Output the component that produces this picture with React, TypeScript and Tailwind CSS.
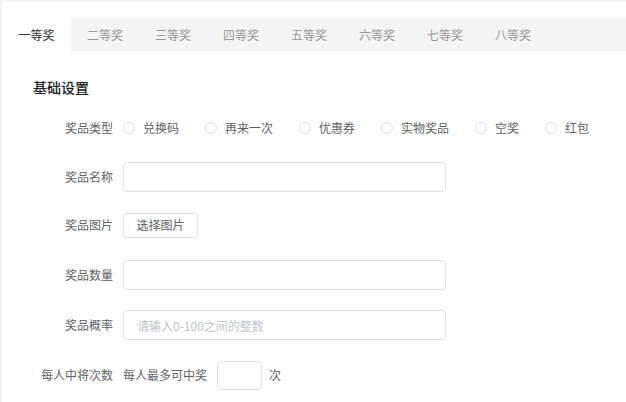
const tabs = ["一等奖", "二等奖", "三等奖", "四等奖", "五等奖", "六等奖", "七等奖", "八等奖"];
const prizeTypes = ["兑换码", "再来一次", "优惠券", "实物奖品", "空奖", "红包"];

function Label({ children }: { children: React.ReactNode }) {
  return (
    <div className="w-[121px] shrink-0 pr-[10px] text-right text-[12px] text-[#606266]">
      {children}
    </div>
  );
}

export default function App() {
  return (
    <div
      className="h-screen bg-[#f2f2f2] pt-[2px] pl-[2px] overflow-hidden"
      style={{ fontFamily: '"Noto Sans CJK SC", "Noto Sans", sans-serif' }}
    >
      <div className="h-full bg-white pt-[16px]">
        <div className="flex h-[33px]">
          <div className="flex w-[69px] items-center justify-center text-[12px] text-[#333]">
            {tabs[0]}
          </div>
          <div className="flex flex-1 bg-[#f4f4f4]">
            {tabs.slice(1).map((t) => (
              <div
                key={t}
                className="flex w-[68px] items-center justify-center text-[12px] text-[#999]"
              >
                {t}
              </div>
            ))}
          </div>
        </div>

        <div className="mt-[26px] pl-[31px] h-[20px] leading-[20px] text-[14px] font-medium text-[#222]">
          基础设置
        </div>

        <div className="mt-[16px] flex h-[30px] items-center">
          <Label>奖品类型</Label>
          {prizeTypes.map((p) => (
            <label key={p} className="mr-[26px] flex items-center">
              <span className="h-[12px] w-[12px] rounded-full border border-[#dcdfe6] bg-white" />
              <span className="ml-[8px] text-[12px] text-[#606266]">{p}</span>
            </label>
          ))}
        </div>

        <div className="mt-[19px] flex h-[30px] items-center">
          <Label>奖品名称</Label>
          <input className="h-[30px] w-[323px] rounded-[4px] border border-[#dcdfe6] px-[13px] text-[12px] outline-none" />
        </div>

        <div className="mt-[18px] flex h-[30px] items-center">
          <Label>奖品图片</Label>
          <button className="h-[25px] w-[75px] rounded-[3px] border border-[#dcdfe6] bg-white text-[12px] text-[#606266]">
            选择图片
          </button>
        </div>

        <div className="mt-[20px] flex h-[30px] items-center">
          <Label>奖品数量</Label>
          <input className="h-[30px] w-[323px] rounded-[4px] border border-[#dcdfe6] px-[13px] text-[12px] outline-none" />
        </div>

        <div className="mt-[20px] flex h-[30px] items-center">
          <Label>奖品概率</Label>
          <input
            placeholder="请输入0-100之间的整数"
            className="h-[30px] w-[323px] rounded-[4px] border border-[#dcdfe6] px-[13px] text-[12px] outline-none placeholder:text-[#c0c4cc]"
          />
        </div>

        <div className="mt-[20px] flex h-[30px] items-center">
          <Label>每人中将次数</Label>
          <span className="text-[12px] text-[#606266]">每人最多可中奖</span>
          <input className="ml-[10px] h-[29px] w-[45px] rounded-[4px] border border-[#dcdfe6] px-[6px] text-[12px] outline-none" />
          <span className="ml-[7px] text-[12px] text-[#606266]">次</span>
        </div>
      </div>
    </div>
  );
}
